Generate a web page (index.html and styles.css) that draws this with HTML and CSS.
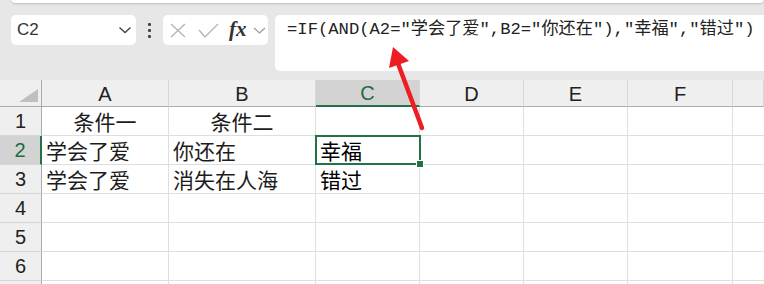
FILE: index.html
```html
<!DOCTYPE html>
<html lang="zh-CN">
<head>
<meta charset="utf-8">
<title>Excel IF AND</title>
<link rel="stylesheet" href="styles.css">
</head>
<body>
<div class="page">
  <div class="topbar"></div>
  <div class="toolbar">
    <div class="namebox">
      <span class="name">C2</span>
      <svg class="chev" width="14" height="8" viewBox="0 0 14 8"><polyline points="1.5,1.5 7,6.5 12.5,1.5" fill="none" stroke="#444" stroke-width="1.4"/></svg>
    </div>
    <div class="dots"><span></span><span></span><span></span></div>
    <div class="fxbox">
      <svg class="ico-x" width="16" height="15" viewBox="0 0 16 15"><path d="M1 1 L15 14 M15 1 L1 14" stroke="#b4b4b4" stroke-width="1.3" fill="none"/></svg>
      <svg class="ico-check" width="21" height="15" viewBox="0 0 21 15"><polyline points="1,7 7,14 20,1" fill="none" stroke="#b4b4b4" stroke-width="1.3"/></svg>
      <span class="fx">fx</span>
      <svg class="chev2" width="13" height="7" viewBox="0 0 13 7"><polyline points="1,1 6.5,6 12,1" fill="none" stroke="#9a9a9a" stroke-width="1.2"/></svg>
    </div>
    <div class="formula">=IF(AND(A2="学会了爱",B2="你还在"),"幸福","错过")</div>
  </div>
  <div class="sheet">
    <div class="corner"><span class="tri"></span></div>
    <div class="ch">A</div>
    <div class="ch">B</div>
    <div class="ch sel">C</div>
    <div class="ch">D</div>
    <div class="ch">E</div>
    <div class="ch">F</div>
    <div class="ch last"></div>

    <div class="rh">1</div>
    <div class="c center">条件一</div>
    <div class="c center">条件二</div>
    <div class="c"></div><div class="c"></div><div class="c"></div><div class="c"></div><div class="c last"></div>

    <div class="rh sel">2</div>
    <div class="c">学会了爱</div>
    <div class="c">你还在</div>
    <div class="c strong active">幸福<span class="selbox"><span class="handle"></span></span></div>
    <div class="c"></div><div class="c"></div><div class="c"></div><div class="c last"></div>

    <div class="rh">3</div>
    <div class="c">学会了爱</div>
    <div class="c">消失在人海</div>
    <div class="c strong">错过</div>
    <div class="c"></div><div class="c"></div><div class="c"></div><div class="c last"></div>

    <div class="rh">4</div>
    <div class="c"></div><div class="c"></div><div class="c"></div><div class="c"></div><div class="c"></div><div class="c"></div><div class="c last"></div>

    <div class="rh">5</div>
    <div class="c"></div><div class="c"></div><div class="c"></div><div class="c"></div><div class="c"></div><div class="c"></div><div class="c last"></div>

    <div class="rh">6</div>
    <div class="c"></div><div class="c"></div><div class="c"></div><div class="c"></div><div class="c"></div><div class="c"></div><div class="c last"></div>

    <div class="rh"></div>
    <div class="c"></div><div class="c"></div><div class="c"></div><div class="c"></div><div class="c"></div><div class="c"></div><div class="c last"></div>
  </div>
  <svg class="arrow" width="764" height="284" viewBox="0 0 764 284">
    <line x1="422" y1="128" x2="396" y2="58" stroke="#ee1d23" stroke-width="4.5" stroke-linecap="round"/>
    <polygon points="393,47 389,68 409,61" fill="#ee1d23"/>
  </svg>
</div>
</body>
</html>
```
FILE: styles.css
```css
html, body {
  margin: 0;
  padding: 0;
}
body {
  background: #e7e7e7;
  width: 764px;
  height: 284px;
  overflow: hidden;
  font-family: "Liberation Sans", Arial, "Noto Sans CJK SC", sans-serif;
  color: #222;
}
.page {
  position: relative;
  width: 764px;
  height: 284px;
  overflow: hidden;
}
.topbar {
  height: 3px;
  margin: 0 1px 0 12px;
  background: #fff;
  border-radius: 0 0 6px 6px;
  box-shadow: 0 1px 2px rgba(0, 0, 0, 0.18);
}
.toolbar {
  display: flex;
  align-items: flex-start;
  margin-top: 12px;
  height: 56px;
}
.namebox {
  margin-left: 11px;
  width: 125px;
  height: 30px;
  box-sizing: border-box;
  background: #fff;
  border-radius: 5px;
  display: flex;
  align-items: center;
  padding: 0 4px 0 6px;
}
.name {
  flex: 1;
  font-size: 17px;
  color: #333;
  line-height: 30px;
}
.chev {
  display: block;
}
.dots {
  width: 27px;
  height: 30px;
  display: flex;
  flex-direction: column;
  align-items: center;
  justify-content: center;
  gap: 3px;
}
.dots span {
  width: 3px;
  height: 3px;
  background: #444;
  border-radius: 1px;
}
.fxbox {
  width: 105px;
  height: 30px;
  box-sizing: border-box;
  background: #fff;
  border-radius: 5px;
  display: flex;
  align-items: center;
  padding-left: 7px;
}
.ico-x {
  display: block;
  margin-right: 12px;
}
.ico-check {
  display: block;
  margin-right: 10px;
}
.fx {
  font-family: "Liberation Serif", "Times New Roman", serif;
  font-style: italic;
  font-weight: bold;
  font-size: 21px;
  color: #333;
  line-height: 30px;
  margin-right: 6px;
  margin-top: -2px;
}
.chev2 {
  display: block;
}
.formula {
  margin-left: 7px;
  margin-right: -6px;
  flex: 1;
  height: 56px;
  box-sizing: border-box;
  background: #fff;
  border-radius: 5px;
  padding: 3px 0 0 12px;
  font-family: "Liberation Mono", "Noto Sans CJK SC", monospace;
  font-size: 17.2px;
  line-height: 24px;
  color: #222;
  white-space: nowrap;
}
.sheet {
  margin-top: 9px;
  display: grid;
  grid-template-columns: 42px 127px 147px 104px 104px 104px 105px 1fr;
  grid-template-rows: 27px;
  grid-auto-rows: 29px;
  background: #fff;
}
.corner,
.ch,
.rh {
  background: #efefef;
  box-sizing: border-box;
}
.corner {
  border-right: 1px solid #ababab;
  border-bottom: 1px solid #ababab;
  display: flex;
  justify-content: flex-end;
  align-items: flex-end;
  padding: 0 3px 4px 0;
}
.tri {
  width: 19px;
  height: 13px;
  background: #bfbfbf;
  clip-path: polygon(100% 0, 100% 100%, 0 100%);
}
.ch {
  border-right: 1px solid #d6d6d6;
  border-bottom: 1px solid #ababab;
  display: flex;
  align-items: center;
  justify-content: center;
  font-size: 20px;
  padding-top: 2px;
  color: #222;
}
.ch.sel {
  background: #d3d3d3;
  color: #1e6b41;
  border-bottom: 2px solid #217346;
}
.rh {
  border-right: 1px solid #ababab;
  border-bottom: 1px solid #d6d6d6;
  display: flex;
  align-items: center;
  justify-content: center;
  font-size: 20px;
  color: #222;
}
.rh.sel {
  background: #d3d3d3;
  color: #1e6b41;
  border-right: 2px solid #217346;
}
.c {
  box-sizing: border-box;
  border-right: 1px solid #dedede;
  border-bottom: 1px solid #dedede;
  font-family: "Noto Sans CJK SC", "Liberation Sans", sans-serif;
  font-size: 21px;
  line-height: 28px;
  padding-left: 4px;
  color: #1c1c1c;
  white-space: nowrap;
  overflow: visible;
}
.c.center {
  text-align: center;
  padding-left: 0;
}
.c.strong {
  color: #000;
}
.c.last {
  border-right: none;
}
.active {
  position: relative;
}
.selbox {
  position: absolute;
  left: -1px;
  top: -1px;
  right: -2px;
  bottom: -1px;
  border: 2px solid #217346;
  pointer-events: none;
}
.handle {
  position: absolute;
  right: -5px;
  bottom: -5px;
  width: 6px;
  height: 6px;
  background: #217346;
  border: 1px solid #fff;
}
.arrow {
  position: absolute;
  left: 0;
  top: 0;
  pointer-events: none;
}
```
